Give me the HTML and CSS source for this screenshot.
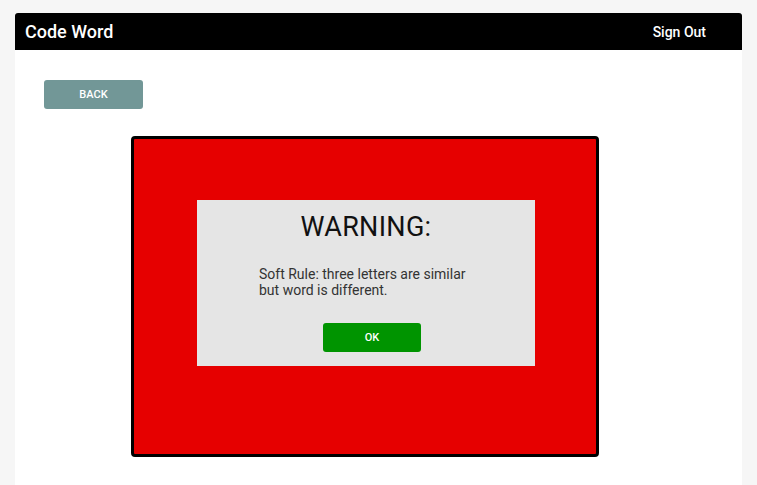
FILE: index.html
```html
<!DOCTYPE html>
<html>
<head>
<meta charset="utf-8">
<link rel="stylesheet" href="styles.css">
</head>
<body>
<div class="app">
  <header class="topbar">
    <span class="brand">Code Word</span>
    <span class="signout">Sign Out</span>
  </header>
  <main class="content">
    <button class="btn back">BACK</button>
    <section class="alert">
      <div class="dialog">
        <h1 class="title">WARNING:</h1>
        <p class="msg">Soft Rule: three letters are similar<br>but word is different.</p>
        <button class="btn ok">OK</button>
      </div>
    </section>
  </main>
</div>
</body>
</html>
```
FILE: styles.css
```css
* { box-sizing: border-box; }
html, body { margin: 0; }
body {
  background: #f6f6f6;
  padding: 13px 15px 0;
  font-family: Roboto, "Liberation Sans", Arial, sans-serif;
}
.app {
  background: #fff;
  width: 727px;
  min-height: 472px;
}
.topbar {
  height: 37px;
  background: #000;
  border-radius: 3px 3px 0 0;
  display: flex;
  align-items: center;
  justify-content: space-between;
  padding: 0 36px 0 10px;
  color: #fff;
}
.brand { font-size: 18px; font-weight: 500; }
.signout { font-size: 14px; font-weight: 500; }
.content {
  padding: 30px 0 0 29px;
}
.btn {
  border: 0;
  border-radius: 3px;
  color: #fff;
  font-family: inherit;
  font-size: 11px;
  font-weight: 500;
  padding: 0;
  display: block;
}
.back {
  width: 99px;
  height: 29px;
  background: #729797;
}
.alert {
  margin: 27px 0 0 87px;
  width: 468px;
  height: 321px;
  background: #e60000;
  border: 3px solid #000;
  border-radius: 4px;
  padding: 61px 0 0 63px;
}
.dialog {
  width: 338px;
  height: 166px;
  background: #e5e5e5;
  padding-top: 11px;
}
.title {
  margin: 0;
  text-align: center;
  font-size: 27px;
  font-weight: 400;
  line-height: 32px;
  color: #111;
  letter-spacing: 0.3px;
}
.msg {
  margin: 23px 0 0 62px;
  font-size: 14px;
  line-height: 16px;
  color: #333;
}
.ok {
  margin: 25px 0 0 126px;
  width: 98px;
  height: 29px;
  background: #009400;
}
```
